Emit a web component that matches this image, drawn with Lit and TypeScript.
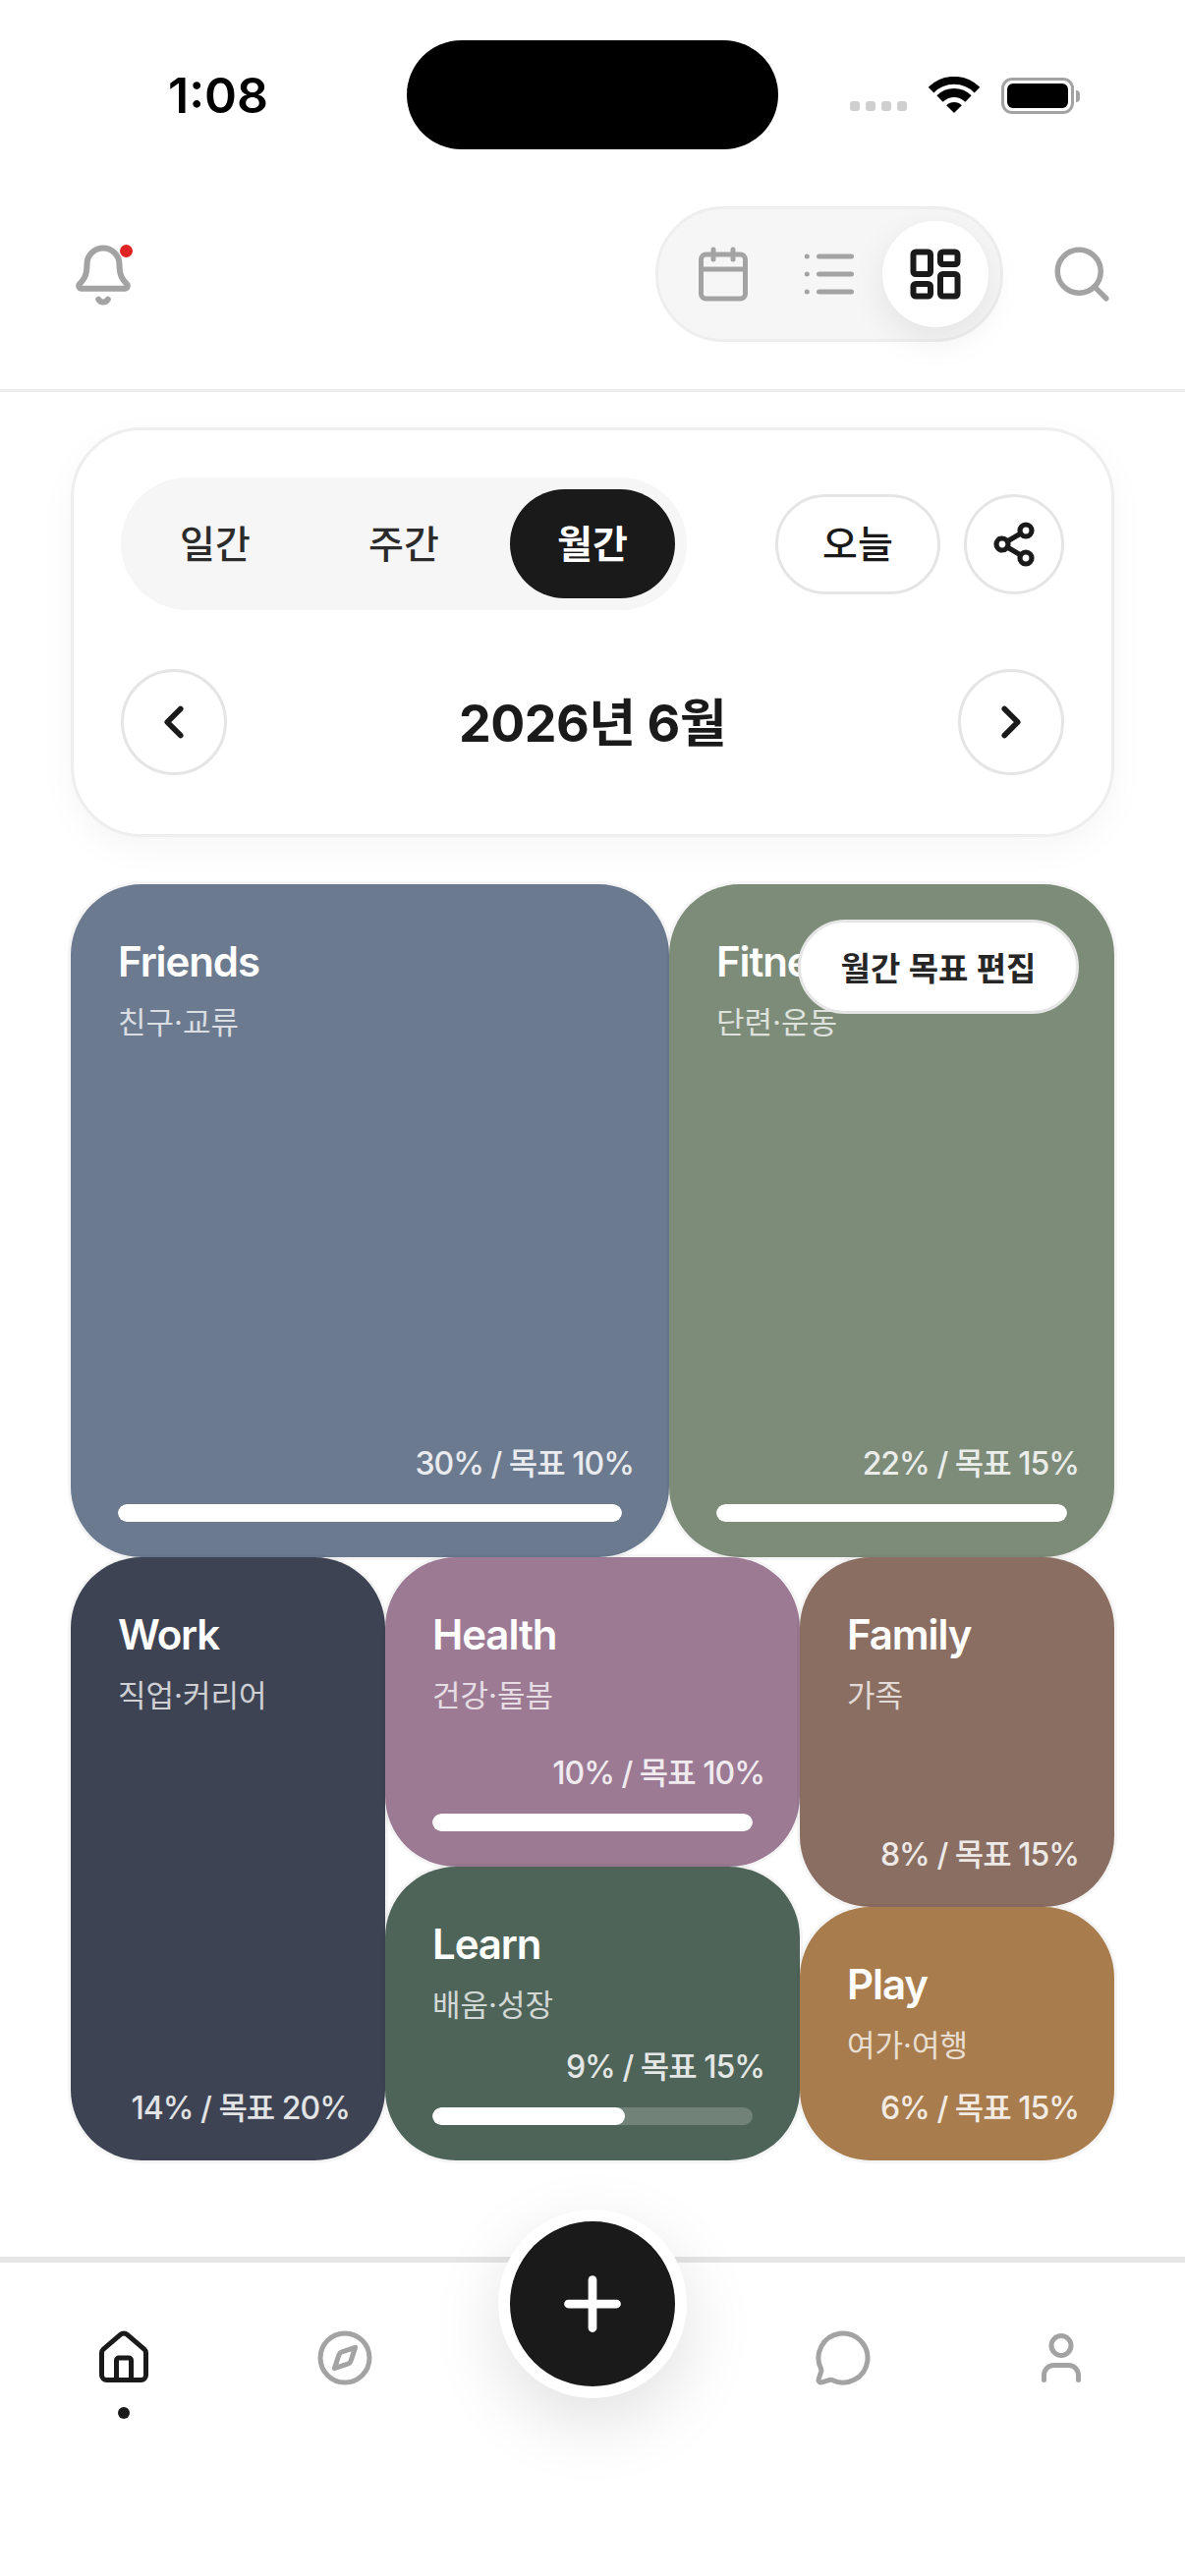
import { LitElement, html, css, svg } from "lit";
import { customElement } from "lit/decorators.js";

type Tile = { name: string; sub: string; label: string; fill?: number; size: number };

const tile = (t: Tile) => html`
  <div class="tile ${t.name.toLowerCase()}" style="flex-basis:${t.size}px">
    <div class="name">${t.name}</div>
    <div class="sub">${t.sub}</div>
    <div class="foot ${t.fill === undefined ? "bare" : ""}">
      <div class="pct">${t.label}</div>
      ${t.fill === undefined
        ? null
        : html`<div class="track"><div class="bar" style="width:${t.fill}%"></div></div>`}
    </div>
  </div>
`;

const icon = (size: number, sw: number, body: unknown, cls = "") => html`
  <svg class=${cls} width=${size} height=${size} viewBox="0 0 24 24" fill="none" stroke="currentColor"
    stroke-width=${sw} stroke-linecap="round" stroke-linejoin="round">${body}</svg>
`;

@customElement("app-root")
export class AppRoot extends LitElement {
  static styles = css`
    :host {
      display: block;
      width: 1206px;
      height: 2622px;
      background: #fff;
      overflow: hidden;
      font-family: Inter, "Noto Sans CJK KR", sans-serif;
      color: #1a1a1a;
    }
    svg { display: block; }
    button {
      font: inherit;
      color: inherit;
      background: none;
      border: 0;
      padding: 0;
      margin: 0;
      display: flex;
      align-items: center;
      justify-content: center;
    }

    .status {
      height: 186px;
      display: grid;
      grid-template-columns: 1fr 378px 1fr;
      align-items: start;
    }
    .time {
      padding-top: 67px;
      padding-left: 171px;
      font-size: 50px;
      line-height: 60px;
      font-weight: 600;
      color: #000;
      font-family: Inter, sans-serif;
    }
    .island {
      height: 111px;
      margin-top: 41px;
      background: #000;
      border-radius: 56px;
    }
    .sys {
      display: flex;
      align-items: flex-end;
      padding-top: 78px;
      padding-left: 73px;
    }
    .dots { display: flex; gap: 6px; margin-bottom: 3px; }
    .dots i { width: 10px; height: 10px; border-radius: 3px; background: #cfcfcf; }
    .wifi { margin-left: 22px; }
    .batt {
      margin-left: 22px;
      width: 74px;
      height: 37px;
      box-sizing: border-box;
      border: 3.5px solid #a3a3a3;
      border-radius: 11px;
      padding: 3px;
    }
    .batt i { display: block; height: 100%; background: #000; border-radius: 6px; }
    .nub { width: 4px; height: 12px; margin: 0 0 12px 2px; background: #a3a3a3; border-radius: 0 4px 4px 0; }

    .header {
      height: 213px;
      box-sizing: border-box;
      border-bottom: 3px solid #eeeeef;
      padding: 24px 72px 0;
      display: flex;
      align-items: flex-start;
    }
    .bell { position: relative; margin-top: 37px; color: #a3a3a3; }
    .bell-dot {
      position: absolute;
      top: 2px;
      right: 3px;
      width: 13px;
      height: 13px;
      border-radius: 50%;
      background: #e02424;
    }
    .toggle {
      margin-left: auto;
      box-sizing: border-box;
      height: 138px;
      padding: 12px;
      display: flex;
      background: #f6f6f6;
      border: 3px solid #eeeeee;
      border-radius: 69px;
    }
    .toggle button { width: 108px; height: 108px; border-radius: 50%; color: #a3a3a3; }
    .toggle button.on {
      background: #fff;
      color: #1a1a1a;
      box-shadow: 0 12px 36px rgba(0, 0, 0, 0.08);
    }
    .search { margin: 36px 0 0 47px; color: #a3a3a3; }

    main { padding: 36px 72px 0; }
    .card {
      box-sizing: border-box;
      height: 417px;
      border: 3px solid #eeeeee;
      border-radius: 72px;
      padding: 48px 48px 60px;
      background: #fff;
      box-shadow: 0 12px 36px rgba(0, 0, 0, 0.04);
      display: flex;
      flex-direction: column;
      gap: 60px;
    }
    .row { display: flex; align-items: center; }
    .seg {
      display: flex;
      gap: 24px;
      padding: 12px;
      background: #f6f6f6;
      border-radius: 68px;
    }
    .seg button {
      width: 168px;
      height: 111px;
      padding-bottom: 6px;
      box-sizing: border-box;
      border-radius: 56px;
      font-size: 39px;
      font-weight: 500;
      color: #2b2b2b;
    }
    .seg button.on { background: #1a1a1a; color: #fff; font-weight: 600; }
    .ghost {
      box-sizing: border-box;
      height: 102px;
      border: 3px solid #e5e5e5;
      border-radius: 51px;
      background: #fff;
    }
    .today { width: 168px; margin-left: auto; padding-bottom: 6px; font-size: 39px; font-weight: 500; }
    .share { width: 102px; margin-left: 24px; }
    .circle {
      box-sizing: border-box;
      width: 108px;
      height: 108px;
      border: 3px solid #e5e5e5;
      border-radius: 50%;
    }
    .title {
      flex: 1;
      padding-top: 3px;
      text-align: center;
      font-size: 52px;
      line-height: 64px;
      font-weight: 700;
      letter-spacing: -0.5px;
    }

    .map {
      position: relative;
      margin-top: 48px;
      height: 1299px;
      display: flex;
      flex-direction: column;
    }
    .map-row { display: flex; min-height: 0; }
    .map-row.a { height: 685px; }
    .map-row.b { height: 614px; }
    .map-col { display: flex; flex: 0 0 auto; flex-direction: column; min-width: 0; }
    .map-col.mid { width: 422px; }
    .map-col.end { width: 320px; }
    .tile {
      position: relative;
      flex: 0 0 auto;
      min-width: 0;
      min-height: 0;
      box-sizing: border-box;
      padding: 52px 0 36px 48px;
      border-radius: 72px;
      box-shadow: 0 0 0 3px rgba(0, 0, 0, 0.04);
      color: #fff;
      display: flex;
      flex-direction: column;
    }
    .name { font-size: 42px; line-height: 54px; font-weight: 600; letter-spacing: -1.1px; }
    .sub { margin-top: 14px; font-size: 31px; line-height: 42px; font-weight: 400; opacity: 0.75; }
    .foot { margin-top: auto; padding-right: 36px; }
    .foot.bare { margin-bottom: -4px; }
    .pct {
      text-align: right;
      font-size: 32px;
      line-height: 42px;
      font-weight: 500;
      letter-spacing: -1px;
      opacity: 0.85;
      white-space: nowrap;
    }
    .track {
      margin: 20px 12px 0 0;
      height: 18px;
      border-radius: 9px;
      background: rgba(255, 255, 255, 0.2);
      overflow: hidden;
    }
    .bar { height: 100%; background: #fff; border-radius: 9px; }
    .friends { background: #6b7a8f; }
    .fitness { background: #7d8c79; }
    .work { background: #3d4353; }
    .health { background: #9c7a94; }
    .learn { background: #4e6458; }
    .family { background: #8b6e62; }
    .play { background: #a87c4c; }
    .edit {
      position: absolute;
      top: 36px;
      right: 36px;
      box-sizing: border-box;
      height: 96px;
      width: 286px;
      border: 3px solid #e5e5e5;
      border-radius: 48px;
      background: #fff;
      font-size: 33px;
      font-weight: 600;
      color: #262626;
      white-space: nowrap;
    }

    nav {
      position: relative;
      margin-top: 98px;
      border-top: 6px solid #e5e5e5;
      display: grid;
      grid-template-columns: 252px 198px 306px 204px 240px;
      padding-top: 67px;
    }
    .tab { display: flex; flex-direction: column; align-items: center; color: #a3a3a3; }
    .tab.on { color: #1a1a1a; }
    .tab-dot { margin-top: 20px; width: 12px; height: 12px; border-radius: 50%; background: #1a1a1a; }
    .fab {
      position: absolute;
      top: -54px;
      left: 507px;
      box-sizing: border-box;
      width: 192px;
      height: 192px;
      border-radius: 50%;
      border: 12px solid #fff;
      background: #1a1a1a;
      color: #fff;
      box-shadow: 0 24px 72px rgba(0, 0, 0, 0.12);
    }
  `;

  render() {
    const a: Tile[] = [
      { name: "Friends", sub: "친구·교류", label: "30% / 목표 10%", fill: 100, size: 609 },
      { name: "Fitness", sub: "단련·운동", label: "22% / 목표 15%", fill: 100, size: 453 },
    ];
    return html`
      <div class="status">
        <div class="time">1:08</div>
        <div class="island"></div>
        <div class="sys">
          <div class="dots"><i></i><i></i><i></i><i></i></div>
          <svg class="wifi" width="52" height="38" viewBox="0 0 52 38" fill="none" stroke="#000">
            ${svg`<path d="M2.6 13.6a33 33 0 0 1 46.8 0" stroke-width="8" />
            <path d="M11.5 22.5a20.5 20.5 0 0 1 29 0" stroke-width="9" />
            <path d="M18.2 29.2a11 11 0 0 1 15.6 0L26 37z" fill="#000" stroke="none" />`}
          </svg>
          <div class="batt"><i></i></div>
          <div class="nub"></div>
        </div>
      </div>

      <div class="header">
        <div class="bell">
          ${icon(66, 2.2, svg`<path d="M10.268 21a2 2 0 0 0 3.464 0" /><path d="M3.262 15.326A1 1 0 0 0 4 17h16a1 1 0 0 0 .74-1.673C19.41 13.956 18 12.499 18 8A6 6 0 0 0 6 8c0 4.499-1.411 5.956-2.738 7.326" />`)}
          <div class="bell-dot"></div>
        </div>
        <div class="toggle">
          <button>
            ${icon(60, 2, svg`<path d="M8 2v4" /><path d="M16 2v4" /><rect x="3" y="4" width="18" height="18" rx="2" /><path d="M3 10h18" />`)}
          </button>
          <button>
            <svg width="60" height="60" viewBox="0 0 60 60" fill="none" stroke="currentColor" stroke-width="5" stroke-linecap="round">
              ${svg`<path d="M19.5 12h33M19.5 30h33M19.5 48h33" /><path d="M7.3 12h.01M7.3 30h.01M7.3 48h.01" />`}
            </svg>
          </button>
          <button class="on">
            ${icon(60, 2.4, svg`<rect x="3" y="3" width="7" height="9" rx="1" /><rect x="14" y="3" width="7" height="5" rx="1" /><rect x="14" y="12" width="7" height="9" rx="1" /><rect x="3" y="16" width="7" height="5" rx="1" />`)}
          </button>
        </div>
        <div class="search">
          ${icon(66, 2, svg`<circle cx="11" cy="11" r="8" /><path d="m21 21-4.3-4.3" />`)}
        </div>
      </div>

      <main>
        <section class="card">
          <div class="row">
            <div class="seg">
              <button>일간</button>
              <button>주간</button>
              <button class="on">월간</button>
            </div>
            <button class="ghost today">오늘</button>
            <button class="ghost share">
              ${icon(48, 2.6, svg`<circle cx="18" cy="5" r="3" /><circle cx="6" cy="12" r="3" /><circle cx="18" cy="19" r="3" /><path d="m8.59 13.51 6.83 3.98" /><path d="m15.41 6.51-6.82 3.98" />`)}
            </button>
          </div>
          <div class="row">
            <button class="circle">${icon(54, 2.5, svg`<path d="m15 18-6-6 6-6" />`)}</button>
            <div class="title">2026년 6월</div>
            <button class="circle">${icon(54, 2.5, svg`<path d="m9 18 6-6-6-6" />`)}</button>
          </div>
        </section>

        <section class="map">
          <div class="map-row a">${a.map(tile)}</div>
          <div class="map-row b">
            ${tile({ name: "Work", sub: "직업·커리어", label: "14% / 목표 20%", size: 320 })}
            <div class="map-col mid">
              ${tile({ name: "Health", sub: "건강·돌봄", label: "10% / 목표 10%", fill: 100, size: 315 })}
              ${tile({ name: "Learn", sub: "배움·성장", label: "9% / 목표 15%", fill: 60, size: 299 })}
            </div>
            <div class="map-col end">
              ${tile({ name: "Family", sub: "가족", label: "8% / 목표 15%", size: 356 })}
              ${tile({ name: "Play", sub: "여가·여행", label: "6% / 목표 15%", size: 258 })}
            </div>
          </div>
          <button class="edit">월간 목표 편집</button>
        </section>
      </main>

      <nav>
        <div class="tab on">
          ${icon(60, 2, svg`<path d="M15 21v-8a1 1 0 0 0-1-1h-4a1 1 0 0 0-1 1v8" /><path d="M3 10a2 2 0 0 1 .709-1.528l7-5.999a2 2 0 0 1 2.582 0l7 5.999A2 2 0 0 1 21 10v9a2 2 0 0 1-2 2H5a2 2 0 0 1-2-2z" />`)}
          <div class="tab-dot"></div>
        </div>
        <div class="tab">
          ${icon(60, 2, svg`<path d="m16.24 7.76-1.804 5.411a2 2 0 0 1-1.265 1.265L7.76 16.24l1.804-5.411a2 2 0 0 1 1.265-1.265z" /><circle cx="12" cy="12" r="10" />`)}
        </div>
        <div></div>
        <div class="tab">
          ${icon(60, 2, svg`<path d="M2.992 16.342a2 2 0 0 1 .094 1.167l-1.065 3.29a1 1 0 0 0 1.236 1.168l3.413-.998a2 2 0 0 1 1.099.092 10 10 0 1 0-4.777-4.719" />`)}
        </div>
        <div class="tab">
          ${icon(60, 2, svg`<path d="M19 21v-2a4 4 0 0 0-4-4H9a4 4 0 0 0-4 4v2" /><circle cx="12" cy="7" r="4" />`)}
        </div>
        <button class="fab">${icon(84, 2.5, svg`<path d="M5 12h14" /><path d="M12 5v14" />`)}</button>
      </nav>
    `;
  }
}
